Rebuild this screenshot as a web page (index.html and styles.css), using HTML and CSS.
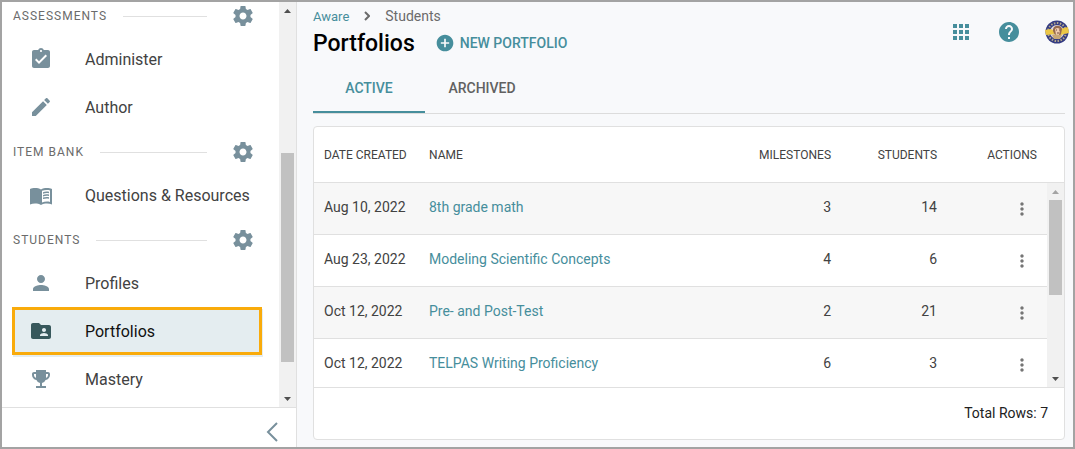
FILE: index.html
```
<!DOCTYPE html>
<html lang="en">
<head>
    <meta charset="UTF-8">
    <meta name="viewport" content="width=device-width, initial-scale=1.0">
    <title>Portfolios</title>
    <link rel="stylesheet" href="styles.css">
</head>
<body>

<!-- Shared icons -->
<svg class="sprite" width="0" height="0" aria-hidden="true">
    <symbol id="gear" viewBox="0 0 24 24"><path d="M19.43 12.98c.04-.32.07-.64.07-.98s-.03-.66-.07-.98l2.11-1.65c.19-.15.24-.42.12-.64l-2-3.46c-.12-.22-.39-.3-.61-.22l-2.49 1c-.52-.4-1.08-.73-1.69-.98l-.38-2.65C14.46 2.18 14.25 2 14 2h-4c-.25 0-.46.18-.49.42l-.38 2.65c-.61.25-1.17.59-1.69.98l-2.49-1c-.23-.09-.49 0-.61.22l-2 3.46c-.13.22-.07.49.12.64l2.11 1.65c-.04.32-.07.65-.07.98s.03.66.07.98l-2.11 1.65c-.19.15-.24.42-.12.64l2 3.46c.12.22.39.3.61.22l2.49-1c.52.4 1.08.73 1.69.98l.38 2.65c.03.24.24.42.49.42h4c.25 0 .46-.18.49-.42l.38-2.65c.61-.25 1.17-.59 1.69-.98l2.49 1c.23.09.49 0 .61-.22l2-3.46c.12-.22.07-.49-.12-.64l-2.11-1.65zM12 15.5c-1.93 0-3.5-1.57-3.5-3.5s1.57-3.5 3.5-3.5 3.5 1.57 3.5 3.5-1.57 3.5-3.5 3.5z"/></symbol>
    <symbol id="dots" viewBox="0 0 24 24"><path d="M12 8c1.1 0 2-.9 2-2s-.9-2-2-2-2 .9-2 2 .9 2 2 2zm0 2c-1.1 0-2 .9-2 2s.9 2 2 2 2-.9 2-2-.9-2-2-2zm0 6c-1.1 0-2 .9-2 2s.9 2 2 2 2-.9 2-2-.9-2-2-2z"/></symbol>
    <symbol id="up" viewBox="0 0 7 4"><path d="M0 4 3.500 0 7 4z"/></symbol>
    <symbol id="down" viewBox="0 0 7 4"><path d="M0 0h7L3.500 4z"/></symbol>
</svg>

<div class="app">
    <aside class="sidebar">
        <div class="sidebar-scroll">
            <nav class="menu">
                <div class="menu-heading">
                    <h2>ASSESSMENTS</h2>
                    <span class="rule"></span>
                    <button class="icon-button" aria-label="Assessments settings"><svg class="icon"><use href="#gear"/></svg></button>
                </div>
                <a class="menu-item" href="#administer">
                    <svg class="icon" viewBox="0 0 24 24"><path d="M19 3h-4.180C14.400 1.840 13.300 1 12 1c-1.300 0-2.400.84-2.820 2H5c-1.100 0-2 .9-2 2v14c0 1.100.9 2 2 2h14c1.100 0 2-.9 2-2V5c0-1.100-.9-2-2-2zm-7 0c.55 0 1 .45 1 1s-.45 1-1 1-1-.45-1-1 .45-1 1-1zm-2 14l-4-4 1.410-1.410L10 14.170l6.590-6.590L18 9l-8 8z"/></svg>
                    Administer
                </a>
                <a class="menu-item" href="#author">
                    <svg class="icon" viewBox="0 0 24 24"><path d="M3 17.250V21h3.750L17.810 9.940l-3.750-3.750L3 17.250zM20.710 7.040c.39-.39.39-1.020 0-1.410l-2.340-2.340c-.39-.39-1.020-.39-1.410 0l-1.830 1.830 3.750 3.750 1.830-1.830z"/></svg>
                    Author
                </a>

                <div class="menu-heading">
                    <h2>ITEM BANK</h2>
                    <span class="rule"></span>
                    <button class="icon-button" aria-label="Item bank settings"><svg class="icon"><use href="#gear"/></svg></button>
                </div>
                <a class="menu-item" href="#questions">
                    <svg class="icon" viewBox="0 0 24 24"><path fill-rule="evenodd" d="M1 6c1.500-.8 3.200-1 5-1 2.200 0 4.400.3 6 1.400C13.600 5.300 15.800 5 18 5c1.800 0 3.500.2 5 1v15.500c-1.600-.7-3.300-1-5-1-2.100 0-4.200.3-6 1.500-1.800-1.200-3.900-1.500-6-1.500-1.700 0-3.400.3-5 1zm12 1.800v11.800c1.600-.7 3.300-1 5-1 1.100 0 2.100.1 3 .4V7.400c-.9-.3-1.900-.4-3-.4-1.800 0-3.500.2-5 .8z"/><path d="M14 9.200c1.900-.7 3.900-.8 6-.4v1.500c-2.100-.4-4.100-.3-6 .4zm0 2.700c1.900-.7 3.900-.8 6-.4V13c-2.100-.4-4.100-.3-6 .4zm0 2.700c1.900-.7 3.900-.8 6-.4v1.500c-2.100-.4-4.100-.3-6 .4z"/></svg>
                    Questions &amp; Resources
                </a>

                <div class="menu-heading">
                    <h2>STUDENTS</h2>
                    <span class="rule"></span>
                    <button class="icon-button" aria-label="Students settings"><svg class="icon"><use href="#gear"/></svg></button>
                </div>
                <a class="menu-item" href="#profiles">
                    <svg class="icon" viewBox="0 0 24 24"><path d="M12 12c2.210 0 4-1.790 4-4s-1.790-4-4-4-4 1.790-4 4 1.790 4 4 4zm0 2c-2.670 0-8 1.340-8 4v2h16v-2c0-2.660-5.330-4-8-4z"/></svg>
                    Profiles
                </a>
                <a class="menu-item active" href="#portfolios" aria-current="page">
                    <svg class="icon" viewBox="0 0 24 24"><path d="M20 6h-8l-2-2H4c-1.100 0-1.990.9-1.990 2L2 18c0 1.100.9 2 2 2h16c1.100 0 2-.9 2-2V8c0-1.100-.9-2-2-2zm-5 3c1.100 0 2 .9 2 2s-.9 2-2 2-2-.9-2-2 .9-2 2-2zm4 8h-8v-1c0-1.330 2.670-2 4-2s4 .67 4 2v1z"/></svg>
                    Portfolios
                </a>
                <a class="menu-item" href="#mastery">
                    <svg class="icon" viewBox="0 0 24 24"><path fill-rule="evenodd" d="M7 3h10v2h2c1.100 0 2 .9 2 2v1c0 2.550-1.920 4.630-4.390 4.940A5 5 0 0 1 13 15.900V19h4v2H7v-2h4v-3.100a5 5 0 0 1-3.610-2.960C4.920 12.630 3 10.550 3 8V7c0-1.100.9-2 2-2h2zM5 7v1c0 1.300.84 2.400 2 2.820V7zm12 0v3.820c1.160-.42 2-1.520 2-2.820V7z"/></svg>
                    Mastery
                </a>
            </nav>
            <div class="scrollbar">
                <button aria-label="Scroll menu up"><svg><use href="#up"/></svg></button>
                <div class="track menu-track"><div class="thumb"></div></div>
                <button aria-label="Scroll menu down"><svg><use href="#down"/></svg></button>
            </div>
        </div>
        <div class="sidebar-footer">
            <button class="collapse" aria-label="Collapse menu">
                <svg width="12" height="20" viewBox="0 0 12 20"><path d="M11 1 2 10l9 9"/></svg>
            </button>
        </div>
    </aside>

    <main class="content">
        <header class="page-header">
            <div class="page-title">
                <nav class="breadcrumb" aria-label="Breadcrumb">
                    <a href="#aware">Aware</a>
                    <svg width="6" height="10" viewBox="0 0 6 10"><path d="m1 1 4 4-4 4"/></svg>
                    <span>Students</span>
                </nav>
                <div class="title-row">
                    <h1>Portfolios</h1>
                    <button class="new-button">
                        <svg width="20" height="20" viewBox="0 0 24 24"><path d="M12 2C6.480 2 2 6.480 2 12s4.480 10 10 10 10-4.480 10-10S17.520 2 12 2zm5 11h-4v4h-2v-4H7v-2h4V7h2v4h4v2z"/></svg>
                        NEW PORTFOLIO
                    </button>
                </div>
            </div>
            <div class="tools">
                <button class="icon-button" aria-label="Apps">
                    <svg class="icon" viewBox="0 0 24 24"><path d="M4 8h4V4H4v4zm6 12h4v-4h-4v4zm-6 0h4v-4H4v4zm0-6h4v-4H4v4zm6 0h4v-4h-4v4zm6-10v4h4V4h-4zm-6 4h4V4h-4v4zm6 6h4v-4h-4v4zm0 6h4v-4h-4v4z"/></svg>
                </button>
                <button class="icon-button" aria-label="Help">
                    <svg class="icon" viewBox="0 0 24 24"><path d="M12 2C6.480 2 2 6.480 2 12s4.480 10 10 10 10-4.480 10-10S17.520 2 12 2zm1 17h-2v-2h2v2zm2.070-7.750l-.9.920C13.450 12.900 13 13.500 13 15h-2v-.5c0-1.100.45-2.100 1.170-2.830l1.240-1.260c.37-.36.590-.86.590-1.410 0-1.100-.9-2-2-2s-2 .9-2 2H8c0-2.210 1.790-4 4-4s4 1.790 4 4c0 .88-.36 1.680-.93 2.250z"/></svg>
                </button>
                <button class="icon-button" aria-label="Account">
                    <!-- school seal -->
                    <svg class="icon" viewBox="0 0 24 24">
                        <circle cx="12" cy="12" r="11.500" fill="#343b82"/>
                        <circle cx="12" cy="12" r="9" fill="none" stroke="#b3a98c" stroke-width="2" stroke-dasharray="1.500 1.500"/>
                        <circle cx="12" cy="12" r="7" fill="#ddd9df"/>
                        <path d="M0 10 6 9l3 2 6-2 8-2 1 6-5 1-3 1-5-1-10 1z" fill="#ecc746"/>
                        <path d="M8 11c-1-6 8-7 9-2l-1 5c-2 4-6 3-8-3z" fill="#966a4d"/>
                        <path d="M10 9c2-2 5-1 5 1l-1 5h-3z" fill="#f0ccb0"/>
                        <path d="M7 15c3-1 7 0 10 0l-2 4H9z" fill="#c7a777"/>
                        <path d="M11 10h1m2 0h1m-3 3h2" stroke="#70483b" fill="none"/>
                    </svg>
                </button>
            </div>
        </header>

        <div class="tabs" role="tablist">
            <button class="tab selected" role="tab" aria-selected="true">ACTIVE</button>
            <button class="tab" role="tab" aria-selected="false">ARCHIVED</button>
        </div>

        <section class="card">
            <div class="table-area">
                <table>
                    <thead>
                        <tr><th>DATE CREATED</th><th>NAME</th><th class="number">MILESTONES</th><th class="number">STUDENTS</th><th class="number">ACTIONS</th></tr>
                    </thead>
                    <tbody>
                        <tr><td>Aug 10, 2022</td><td><a href="#p1">8th grade math</a></td><td class="number">3</td><td class="number">14</td><td class="actions"><button aria-label="Actions"><svg><use href="#dots"/></svg></button></td></tr>
                        <tr><td>Aug 23, 2022</td><td><a href="#p2">Modeling Scientific Concepts</a></td><td class="number">4</td><td class="number">6</td><td class="actions"><button aria-label="Actions"><svg><use href="#dots"/></svg></button></td></tr>
                        <tr><td>Oct 12, 2022</td><td><a href="#p3">Pre- and Post-Test</a></td><td class="number">2</td><td class="number">21</td><td class="actions"><button aria-label="Actions"><svg><use href="#dots"/></svg></button></td></tr>
                        <tr><td>Oct 12, 2022</td><td><a href="#p4">TELPAS Writing Proficiency</a></td><td class="number">6</td><td class="number">3</td><td class="actions"><button aria-label="Actions"><svg><use href="#dots"/></svg></button></td></tr>
                    </tbody>
                </table>
                <div class="scrollbar table-scrollbar">
                    <button class="at-end" aria-label="Scroll rows up"><svg><use href="#up"/></svg></button>
                    <div class="track"><div class="thumb"></div></div>
                    <button aria-label="Scroll rows down"><svg><use href="#down"/></svg></button>
                </div>
            </div>
            <footer class="card-footer">Total Rows: 7</footer>
        </section>
    </main>
</div>

</body>
</html>
```
FILE: styles.css
```
* { box-sizing: border-box; }
body { margin: 0; font-family: Roboto, sans-serif; font-size: 14px; color: #424242; }
h1, h2 { margin: 0; }
a { color: #468e9c; text-decoration: none; }
button { padding: 0; border: none; background: none; font: inherit; color: inherit; cursor: pointer; }
svg { display: block; flex: none; fill: currentColor; }
.sprite { position: absolute; }
.icon { width: 24px; height: 24px; }
.icon-button { width: 24px; height: 24px; }

.app { display: flex; height: 100vh; border: 2px solid #a3a3a3; background-color: #f8f9fb; }

/* Sidebar */
.sidebar { display: flex; flex-direction: column; flex: none; width: 295px; background-color: #fff; border-right: 1px solid #e0e0e0; }
.sidebar-scroll { display: flex; flex: 1; min-height: 0; }
.menu { flex: 1; overflow: hidden; }
.menu-heading { display: flex; align-items: center; height: 28px; margin: 7px 24px 5px 11px; color: #78909c; }
.menu-heading:first-child { margin-top: 0; }
.menu-heading h2 { font-size: 12px; font-weight: 400; letter-spacing: 1px; color: #6b6b6b; }
.rule { flex: 1; height: 1px; margin: 0 24px 0 16px; background-color: #e0e0e0; }
.menu-item { display: flex; align-items: center; gap: 32px; height: 48px; margin: 0 17px 0 10px; padding-left: 17px; font-size: 16px; color: #424242; }
.menu-item .icon { color: #78909c; }
.menu-item.active { padding-left: 14px; border: 3px solid #f9ab0b; background-color: #e4edf0; box-shadow: 1px 2px 0 #e4edf0; color: #111; }
.menu-item.active .icon { color: #37585c; }
.sidebar-footer { display: flex; justify-content: flex-end; align-items: center; height: 40px; padding: 8px 18px 0 0; border-top: 1px solid #e0e0e0; }
.collapse svg { fill: none; stroke: #78909c; stroke-width: 2; }

/* Scrollbars */
.scrollbar { display: flex; flex-direction: column; flex: none; width: 17px; background-color: #f1f1f1; color: #505050; }
.scrollbar button { display: flex; justify-content: center; align-items: center; height: 17px; }
.scrollbar svg { width: 7px; height: 4px; }
.scrollbar .at-end { color: #a3a3a3; }
.track { flex: 1; padding: 0 2px; }
.thumb { height: 56%; background-color: #c1c1c1; }
.menu-track { display: flex; flex-direction: column; justify-content: flex-end; padding-bottom: 28px; }
.menu-track .thumb { height: 61%; }

/* Page header */
.content { display: flex; flex-direction: column; flex: 1; min-width: 0; padding: 6px 8px 7px 16px; }
.page-header { display: flex; justify-content: space-between; }
.breadcrumb { display: flex; align-items: center; gap: 15px; height: 16px; font-size: 14px; color: #6b6b6b; }
.breadcrumb a { font-size: 13px; }
.breadcrumb svg { fill: none; stroke: currentColor; stroke-width: 2; }
.title-row { display: flex; align-items: center; gap: 20px; height: 38px; }
h1 { font-size: 23px; font-weight: 500; color: #000; }
.new-button { display: flex; align-items: center; gap: 5px; font-weight: 500; color: #468e9c; }
.tools { display: flex; align-items: center; gap: 24px; height: 48px; margin-right: -4px; color: #468e9c; }

/* Tabs */
.tabs { display: flex; height: 52px; border-bottom: 1px solid #dcdcdc; }
.tab { min-width: 114px; height: 51px; padding-top: 2px; border-bottom: 2px solid transparent; font-weight: 500; color: #616161; }
.tab.selected { min-width: 112px; border-color: #468e9c; color: #468e9c; }

/* Portfolio table */
.card { display: flex; flex-direction: column; flex: 1; min-height: 0; margin-top: 12px; border: 1px solid #e0e0e0; border-radius: 4px; background-color: #fff; overflow: hidden; }
.table-area { display: grid; grid-template-columns: 1fr 17px; grid-template-rows: 56px 1fr; flex: 1; min-height: 0; }
table { display: contents; }
thead { display: block; grid-column: 1 / 3; }
tbody { display: block; grid-column: 1; overflow: hidden; }
.table-scrollbar { grid-column: 2; grid-row: 2; }
tr { display: grid; grid-template-columns: 105px 1fr 100px 106px 100px; align-items: center; height: 52px; padding: 0 10px; border-bottom: 1px solid #e0e0e0; }
thead tr { height: 56px; padding-right: 27px; }
tbody tr:nth-child(odd) { background-color: #f7f7f7; }
th, td { padding: 0; text-align: left; }
th { font-size: 12px; font-weight: 400; }
td { padding-bottom: 4px; }
.number { text-align: right; }
.actions { display: flex; justify-content: flex-end; padding: 0; }
.actions button { display: flex; justify-content: center; width: 30px; color: #757575; }
.actions svg { width: 20px; height: 20px; }
.card-footer { display: flex; justify-content: flex-end; align-items: center; height: 52px; padding: 0 16px 2px; border-top: 1px solid #e0e0e0; color: #212121; }
```
